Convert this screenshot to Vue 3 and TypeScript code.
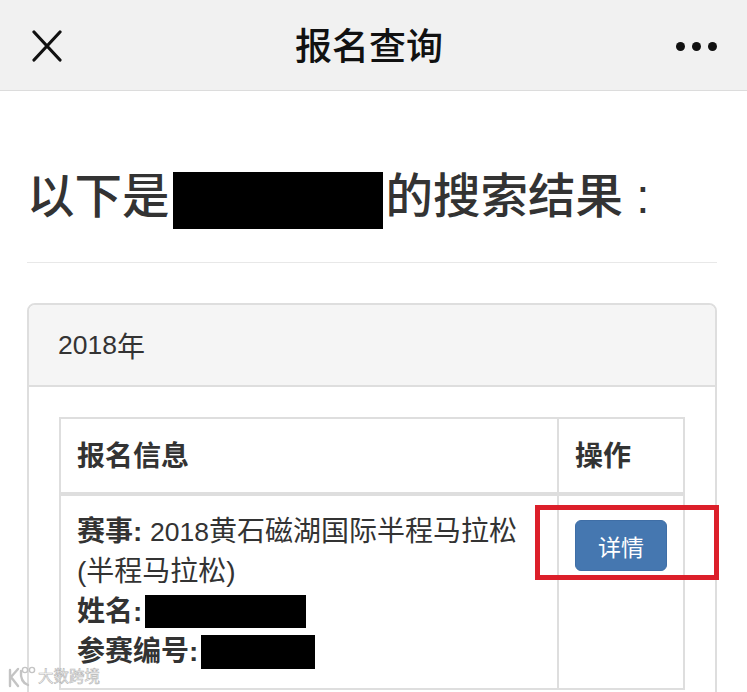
<script setup lang="ts">
const title: string = '报名查询'
</script>

<template>
  <div class="page">
    <header class="nav">
      <svg class="close" width="30" height="32" viewBox="0 0 30 32" aria-hidden="true">
        <path d="M2 2 L28 30 M28 2 L2 30" stroke="#111" stroke-width="3.2" stroke-linecap="round" fill="none" />
      </svg>
      <div class="nav-title">{{ title }}</div>
      <div class="dots"><i></i><i></i><i></i></div>
    </header>

    <main class="content">
      <h1 class="heading">以下是<span class="mask mask-h"></span>的搜索结果 :</h1>
      <section class="panel">
        <div class="panel-head"><span class="num">2018</span>年</div>
        <div class="panel-body">
          <table class="grid">
            <thead>
              <tr>
                <th class="col-a">报名信息</th>
                <th class="col-b">操作</th>
              </tr>
            </thead>
            <tbody>
              <tr>
                <td>
                  <div class="line"><b>赛事:</b> <span class="num">2018</span>黄石磁湖国际半程马拉松</div>
                  <div class="line">(半程马拉松)</div>
                  <div class="line"><b>姓名:</b><span class="mask mask-name"></span></div>
                  <div class="line"><b>参赛编号:</b><span class="mask mask-no"></span></div>
                </td>
                <td class="action">
                  <button class="btn" type="button">详情</button>
                </td>
              </tr>
            </tbody>
          </table>
        </div>
      </section>
    </main>

    <div class="red-box"></div>

    <div class="watermark">
      <svg width="30" height="24" viewBox="0 0 30 24" aria-hidden="true">
        <path d="M3 5 V21 M11 4 L4 12 L11 21 M14 6 Q13 17 21 20" stroke="#c4c4c4" stroke-width="2.4" fill="none" stroke-linecap="round" />
        <circle cx="18" cy="5" r="2.6" stroke="#c4c4c4" stroke-width="1.4" fill="#fff" />
        <circle cx="25" cy="5" r="2.6" stroke="#c4c4c4" stroke-width="1.4" fill="#fff" />
      </svg>
      <span>大数跨境</span>
    </div>
  </div>
</template>

<style>
html, body { margin: 0; background: #fff; overflow: hidden; }
</style>

<style scoped>
.page {
  position: relative;
  width: 747px;
  height: 692px;
  overflow: hidden;
  background: #fff;
  color: #333;
  font-family: "Liberation Sans", "Noto Sans CJK SC", sans-serif;
}
.nav {
  box-sizing: border-box;
  height: 91px;
  display: flex;
  align-items: center;
  justify-content: space-between;
  padding: 2px 30px 0 32px;
  background: #f1f1f1;
  border-bottom: 1px solid #dcdcdc;
}
.close { display: block; }
.nav-title {
  margin-top: 4px;
  font-size: 37px;
  font-weight: 500;
  line-height: 44px;
  color: #111;
}
.dots { display: flex; gap: 7px; }
.dots i {
  display: block;
  width: 9px;
  height: 9px;
  border-radius: 50%;
  background: #111;
}
.content { padding: 0 30px 0 27px; }
.heading {
  box-sizing: border-box;
  margin: 0;
  height: 172px;
  padding: 76px 0 0;
  font-size: 47.5px;
  line-height: 60px;
  font-weight: 500;
  color: #333;
  white-space: nowrap;
  border-bottom: 1px solid #e8e8e8;
}
.mask { display: inline-block; background: #000; }
.mask-h {
  width: 210px;
  height: 57px;
  margin: 0 3px;
  vertical-align: -16px;
}
.panel {
  box-sizing: border-box;
  margin-top: 40px;
  height: 420px;
  border: 2px solid #dedede;
  border-radius: 8px;
  overflow: hidden;
}
.panel-head {
  box-sizing: border-box;
  height: 82px;
  padding: 0 30px 0 29px;
  display: flex;
  align-items: center;
  font-size: 28px;
  color: #333;
  background: #f5f5f5;
  border-bottom: 2px solid #dedede;
}
.num { font-size: 26.5px; }
.panel-body { padding: 30px 30px 0; }
.grid {
  width: 626px;
  table-layout: fixed;
  border-collapse: collapse;
  border: 2px solid #dedede;
}
.grid th, .grid td {
  box-sizing: border-box;
  border: 2px solid #dedede;
  padding: 0 16px;
  text-align: left;
  vertical-align: top;
}
.col-a { width: 498px; }
.grid th {
  height: 76px;
  font-size: 28px;
  line-height: 36px;
  font-weight: 700;
  vertical-align: middle;
  border-bottom-width: 4px;
  padding-top: 2px;
}
.grid td {
  height: 195px;
  padding-top: 16px;
  font-size: 28px;
  line-height: 40px;
}
.line { white-space: nowrap; }
.line b { font-weight: 700; }
.mask-name { width: 161px; height: 33px; margin-left: 3px; vertical-align: -7px; }
.mask-no { width: 114px; height: 34px; margin-left: 3px; vertical-align: -8px; }
.grid td.action { padding-top: 24px; }
.btn {
  display: block;
  box-sizing: border-box;
  width: 92px;
  height: 51px;
  padding: 0;
  font-family: inherit;
  font-size: 23px;
  color: #fff;
  background: #4577b0;
  border: 1px solid #3f6ea6;
  border-radius: 6px;
}
.red-box {
  position: absolute;
  left: 535px;
  top: 505px;
  width: 184px;
  height: 75px;
  box-sizing: border-box;
  border: 5px solid #dc1f2a;
}
.watermark {
  position: absolute;
  left: 7px;
  top: 665px;
  display: flex;
  align-items: center;
  gap: 1px;
  font-size: 15.5px;
  line-height: 24px;
  color: #fff;
  -webkit-text-stroke: 0.6px #b5b5b5;
}
</style>
